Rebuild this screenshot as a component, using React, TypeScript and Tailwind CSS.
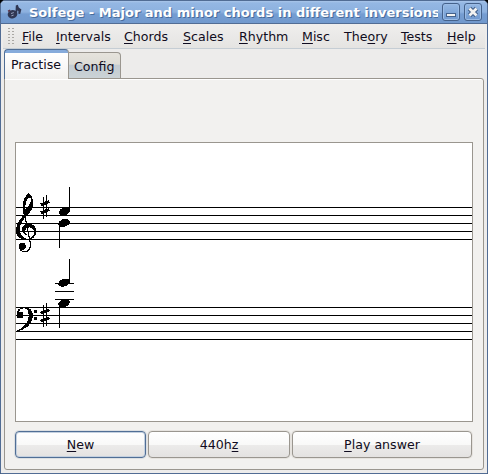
import React from "react";

const menus = [
  { pre: "", key: "F", post: "ile", w: "w-[34px]" },
  { pre: "", key: "I", post: "ntervals", w: "w-[68px]" },
  { pre: "", key: "C", post: "hords", w: "w-[59px]" },
  { pre: "", key: "S", post: "cales", w: "w-[56px]" },
  { pre: "", key: "R", post: "hythm", w: "w-[63px]" },
  { pre: "", key: "M", post: "isc", w: "w-[42px]" },
  { pre: "The", key: "o", post: "ry", w: "w-[57px]" },
  { pre: "", key: "T", post: "ests", w: "w-[46px]" },
  { pre: "", key: "H", post: "elp", w: "w-[30px]" },
];

function Label({ pre, k, post }: { pre: string; k: string; post: string }) {
  return (
    <span className="whitespace-pre">
      {pre}
      <span className="underline underline-offset-2 decoration-1">{k}</span>
      {post}
    </span>
  );
}

function Sharp({ x, y }: { x: number; y: number }) {
  return (
    <g transform={`translate(${x} ${y})`}>
      <path d="M8.5 5V72M17.5 0V67" strokeWidth="3" />
      <path d="M0 29.5L26 19.5M0 53.5L26 43.5" strokeWidth="9" />
    </g>
  );
}

function Note({ x, y }: { x: number; y: number }) {
  return <ellipse cx={x} cy={y} rx="17.5" ry="11.5" transform={`rotate(-18 ${x} ${y})`} fill="black" stroke="none" />;
}

function Score() {
  return (
    <svg className="block" width="456" height="278" viewBox="16 143 456 278" shapeRendering="crispEdges">
      {[207, 215, 223, 231, 239, 307, 315, 323, 331, 339].map((y) => (
        <rect key={y} x="16" y={y} width="456" height="1" />
      ))}
      <g transform="translate(0 180) scale(.333333)" fill="none" stroke="black" strokeWidth="3">
        <path
          fill="black"
          stroke="none"
          fillRule="evenodd"
          d="M84 39C94 44 100 56 99 69C99 84 92 97 81 108C69 119 61 129 60 143C58 157 64 169 74 174C85 179 98 174 101 163C104 151 98 142 89 142C79 142 73 150 76 157C78 161 81 163 84 165C71 165 63 156 65 146C67 136 76 131 87 131C100 131 110 142 109 154C108 171 95 181 79 181C60 180 47 168 48 150C48 133 59 119 71 105C65 82 66 58 84 39ZM90 52C80 55 74 72 76 89C85 81 92 71 93 61C93 56 92 53 90 52Z"
        />
        <path d="M73 99L91 190C93 208 84 216 72 215C64 214 60 208 60 202" strokeWidth="3.5" />
        <circle cx="67" cy="199" r="10.5" fill="black" stroke="none" />
        <Sharp x={122} y={45} />
        <Note x={194} y={94} />
        <path d="M208.5 21V93M178.5 129V204" />
        <Note x={192} y={129} />
      </g>
      <g transform="translate(0 250) scale(.333333)" fill="none" stroke="black" strokeWidth="3">
        <path
          fill="black"
          stroke="none"
          d="M51 197C48 181 58 171 73 171C91 171 100 183 99 200C97 224 75 240 49 245V242C70 234 86 219 86 198C86 184 82 175 72 175C63 175 57 180 55 187Z"
        />
        <circle cx="60" cy="195" r="10.5" fill="black" stroke="none" />
        <path d="M102 184H111M102 206H111" strokeWidth="9" />
        <Sharp x={122} y={160} />
        <Note x={192} y={98} />
        <Note x={192} y={160} />
        <path d="M208.5 27V98M178.5 160V234M165 100.5H222M165 124.5H222M165 148.5H222" />
      </g>
    </svg>
  );
}

function AppIcon() {
  return (
    <svg width="16" height="18" viewBox="0 0 16 18" className="block">
      <ellipse cx="5.5" cy="11.2" rx="4.8" ry="4.2" transform="rotate(-15 5.5 11.2)" fill="#303753" />
      <path d="M8.4 11L8.8 2.5L10.8 1.8L11.8 4.6L14.4 6.5L13.2 11L11.3 10.8L11.4 8L10.4 7.4L10 12Z" fill="#303753" />
      <path d="M4 10.5L6.8 9.6M4.4 12.8L6.6 12.1" stroke="#a5afcb" strokeWidth="0.9" />
      <path d="M1 8.2L3.3 7.2" stroke="#5c3449" strokeWidth="1.5" />
    </svg>
  );
}

function WindowButton({ close = false }: { close?: boolean }) {
  return (
    <div className="flex h-[18px] w-[18px] items-center justify-center rounded-[3px] border border-[#45628b] bg-gradient-to-b from-[#94b8e4] to-[#7099cf] shadow-[inset_0_0_0_1px_#9bbce5]">
      <svg width="16" height="16" viewBox="0 0 16 16" className="shrink-0">
        {close ? (
          <>
            <path d="M4.5 4.5L11.5 11.5M11.5 4.5L4.5 11.5" stroke="#45628b" strokeWidth="4.8" />
            <path d="M4.5 4.5L11.5 11.5M11.5 4.5L4.5 11.5" stroke="#f3f3f1" strokeWidth="2.7" />
          </>
        ) : (
          <rect x="3.5" y="9.5" width="9" height="3" fill="#f3f3f1" stroke="#45628b" />
        )}
      </svg>
    </div>
  );
}

function Button({ width, focus = false, children }: { width: string; focus?: boolean; children: React.ReactNode }) {
  return (
    <button
      className={`${width} ${focus ? "border-[#506e95] shadow-[inset_0_0_0_1px_#c4d0df,0_0_0_1px_#dcdfe2]" : "border-[#9a968f] shadow-[0_0_0_1px_#e6e3df]"} h-[27px] shrink-0 rounded-[4px] border bg-[linear-gradient(#ffffff_0%,#f9f9f8_50%,#ecebea_52%,#e4e2e1_100%)] pt-px text-[12.6px] leading-none`}
    >
      {children}
    </button>
  );
}

export default function App() {
  return (
    <div className="h-[474px] w-[488px] overflow-hidden bg-black font-['DejaVu_Sans',sans-serif] text-[12.6px] text-[#100c20]">
      <div className="flex h-full flex-col overflow-hidden rounded-t-[5px] border border-[#516c94] bg-[#edeceb]">
        <header className="flex h-[23px] shrink-0 items-center border-b border-[#516c94] bg-[linear-gradient(#a9c6ea_0px,#94b7e3_2px,#8db1df_11px,#759dd2_13px,#7199cd_22px)] pl-[6px] pr-[5px]">
          <AppIcon />
          <div className="ml-[6px] w-[409px] shrink-0 overflow-hidden whitespace-nowrap pt-px text-[13px] font-bold leading-[20px] text-white [text-shadow:1px_1px_0_#486b9a]">
            Solfege - Major and minor chords in different inversions
          </div>
          <div className="ml-[4px] flex gap-[4px]">
            <WindowButton />
            <WindowButton close />
          </div>
        </header>
        <nav className="mx-[2px] flex h-[25px] shrink-0 items-center border-b border-[#c5cdd4] bg-gradient-to-b from-[#efeeed] to-[#e5e4e2] pl-[4px]">
          <div className="mr-[7px] h-[18px] w-[8px] bg-[radial-gradient(circle,#aaa8a4_0.7px,transparent_0.9px)] bg-[size:4px_3px]" />
          {menus.map((m) => (
            <div key={m.key} className={`${m.w} shrink-0 pt-[2px] leading-[24px]`}>
              <Label pre={m.pre} k={m.key} post={m.post} />
            </div>
          ))}
        </nav>
        <main className="ml-[3px] mr-[3px] flex flex-1 flex-col pb-[3px]">
          <div className="flex h-[29px] shrink-0 items-end">
            <div className="z-10 -mb-px flex h-[30px] w-[65px] shrink-0 flex-col rounded-t-[4px] border border-b-0 border-[#506e95] border-r-[#9a968f] bg-[linear-gradient(#86abdb_0px,#86abdb_3px,#ffffff_3px,#f2f1ef_100%)] pl-[6px] pt-[4px] leading-[22px]">
              Practise
            </div>
            <div className="h-[26px] w-[52px] shrink-0 rounded-tr-[4px] border border-b-0 border-l-0 border-[#9a968f] bg-[linear-gradient(#e6e3dc_0%,#dddcd6_45%,#c2cbd1_48%,#cbd2d6_100%)] pl-[5px] leading-[28px]">
              Config
            </div>
          </div>
          <section className="flex flex-1 flex-col rounded-b-[3px] rounded-tr-[3px] border border-[#9a968f] bg-[#f2f1ef] px-[10px] pt-[63px] shadow-[inset_0_1px_0_#fff]">
            <div className="h-[280px] w-[458px] shrink-0 border border-[#9a968f] bg-white">
              <Score />
            </div>
            <div className="mt-[9px] flex gap-[2px]">
              <Button width="w-[131px]" focus><Label pre="" k="N" post="ew" /></Button>
              <Button width="w-[142px]"><Label pre="440h" k="z" post="" /></Button>
              <Button width="w-[180px]"><Label pre="" k="P" post="lay answer" /></Button>
            </div>
          </section>
        </main>
      </div>
    </div>
  );
}
